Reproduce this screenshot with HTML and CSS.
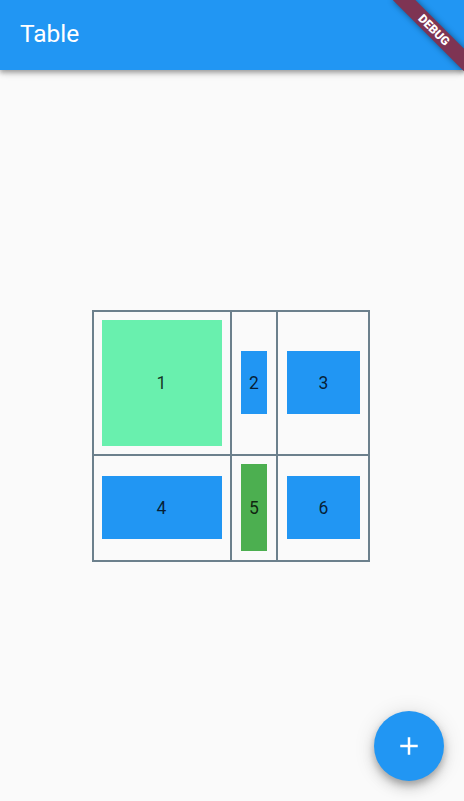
FILE: index.html
```html
<!DOCTYPE html>
<html lang="en">
<head>
    <meta charset="UTF-8">
    <meta name="viewport" content="width=device-width, initial-scale=1.0">
    <title>Table</title>
    <link rel="stylesheet" href="styles.css">
</head>
<body>
    <header class="app-bar">
        <h1 class="app-title">Table</h1>
    </header>

    <main class="content">
        <div class="table">
            <div class="cell"><div class="box box-1 accent">1</div></div>
            <div class="cell"><div class="box box-2">2</div></div>
            <div class="cell"><div class="box box-3">3</div></div>
            <div class="cell"><div class="box box-4">4</div></div>
            <div class="cell"><div class="box box-5 green">5</div></div>
            <div class="cell"><div class="box box-6">6</div></div>
        </div>
    </main>

    <button class="fab" aria-label="Add">
        <svg viewBox="0 0 24 24" width="30" height="30">
            <path d="M19 13h-6v6h-2v-6H5v-2h6V5h2v6h6v2z" fill="#fff"/>
        </svg>
    </button>

    <div class="debug-banner">DEBUG</div>
</body>
</html>
```

FILE: styles.css
```css
body {
    margin: 0;
    height: 801px;
    display: flex;
    flex-direction: column;
    background-color: #fafafa;
    font-family: Roboto, "Noto Sans", sans-serif;
    overflow: hidden;
}
.app-bar {
    height: 70px;
    flex-shrink: 0;
    display: flex;
    align-items: center;
    padding: 0 20px;
    background-color: #2196F3;
    box-shadow: 0 2px 4px rgba(0, 0, 0, 0.2), 0 4px 5px rgba(0, 0, 0, 0.14), 0 1px 10px rgba(0, 0, 0, 0.12);
    position: relative;
    z-index: 1;
}
.app-title {
    margin: 0 0 4px;
    font-size: 24.5px;
    font-weight: 400;
    color: #fff;
}
.content {
    flex: 1;
    display: flex;
    align-items: center;
    justify-content: center;
    padding-right: 2px;
}
/* Table - grid lines drawn by the gap */
.table {
    display: grid;
    grid-template-columns: 136px 44px 90px;
    grid-template-rows: 142px 104px;
    gap: 2px;
    padding: 2px;
    background-color: #6c808c;
}
.cell {
    background-color: #fafafa;
    display: flex;
    align-items: center;
    justify-content: center;
}
.box {
    display: flex;
    align-items: center;
    justify-content: center;
    background-color: #2196F3;
    color: rgba(0, 0, 0, 0.8);
    font-size: 17.5px;
}
.accent {
    background-color: #69F0AE;
}
.green {
    background-color: #4CAF50;
}
.box-1 { width: 120px; height: 126px; margin-right: 1px; }
.box-2 { width: 26px; height: 63px; }
.box-3 { width: 73px; height: 63px; margin-left: 1px; }
.box-4 { width: 120px; height: 63px; margin-right: 1px; }
.box-5 { width: 26px; height: 87px; }
.box-6 { width: 73px; height: 63px; margin-left: 1px; }
/* Floating action button */
.fab {
    position: absolute;
    right: 20px;
    bottom: 20px;
    width: 70px;
    height: 70px;
    border: none;
    border-radius: 50%;
    background-color: #2196F3;
    display: flex;
    align-items: center;
    justify-content: center;
    padding: 0;
    box-shadow: 0 4px 6px rgba(0, 0, 0, 0.2), 0 7px 13px rgba(0, 0, 0, 0.14), 0 2px 22px rgba(0, 0, 0, 0.12);
}
/* Debug ribbon */
.debug-banner {
    position: absolute;
    left: 384px;
    top: 22px;
    width: 100px;
    height: 16px;
    transform: rotate(45deg);
    background-color: #7e3453;
    box-shadow: 0 0 6px rgba(0, 0, 0, 0.45);
    color: #fff;
    font-size: 12px;
    font-weight: 900;
    line-height: 16px;
    text-align: center;
    z-index: 2;
}
```
